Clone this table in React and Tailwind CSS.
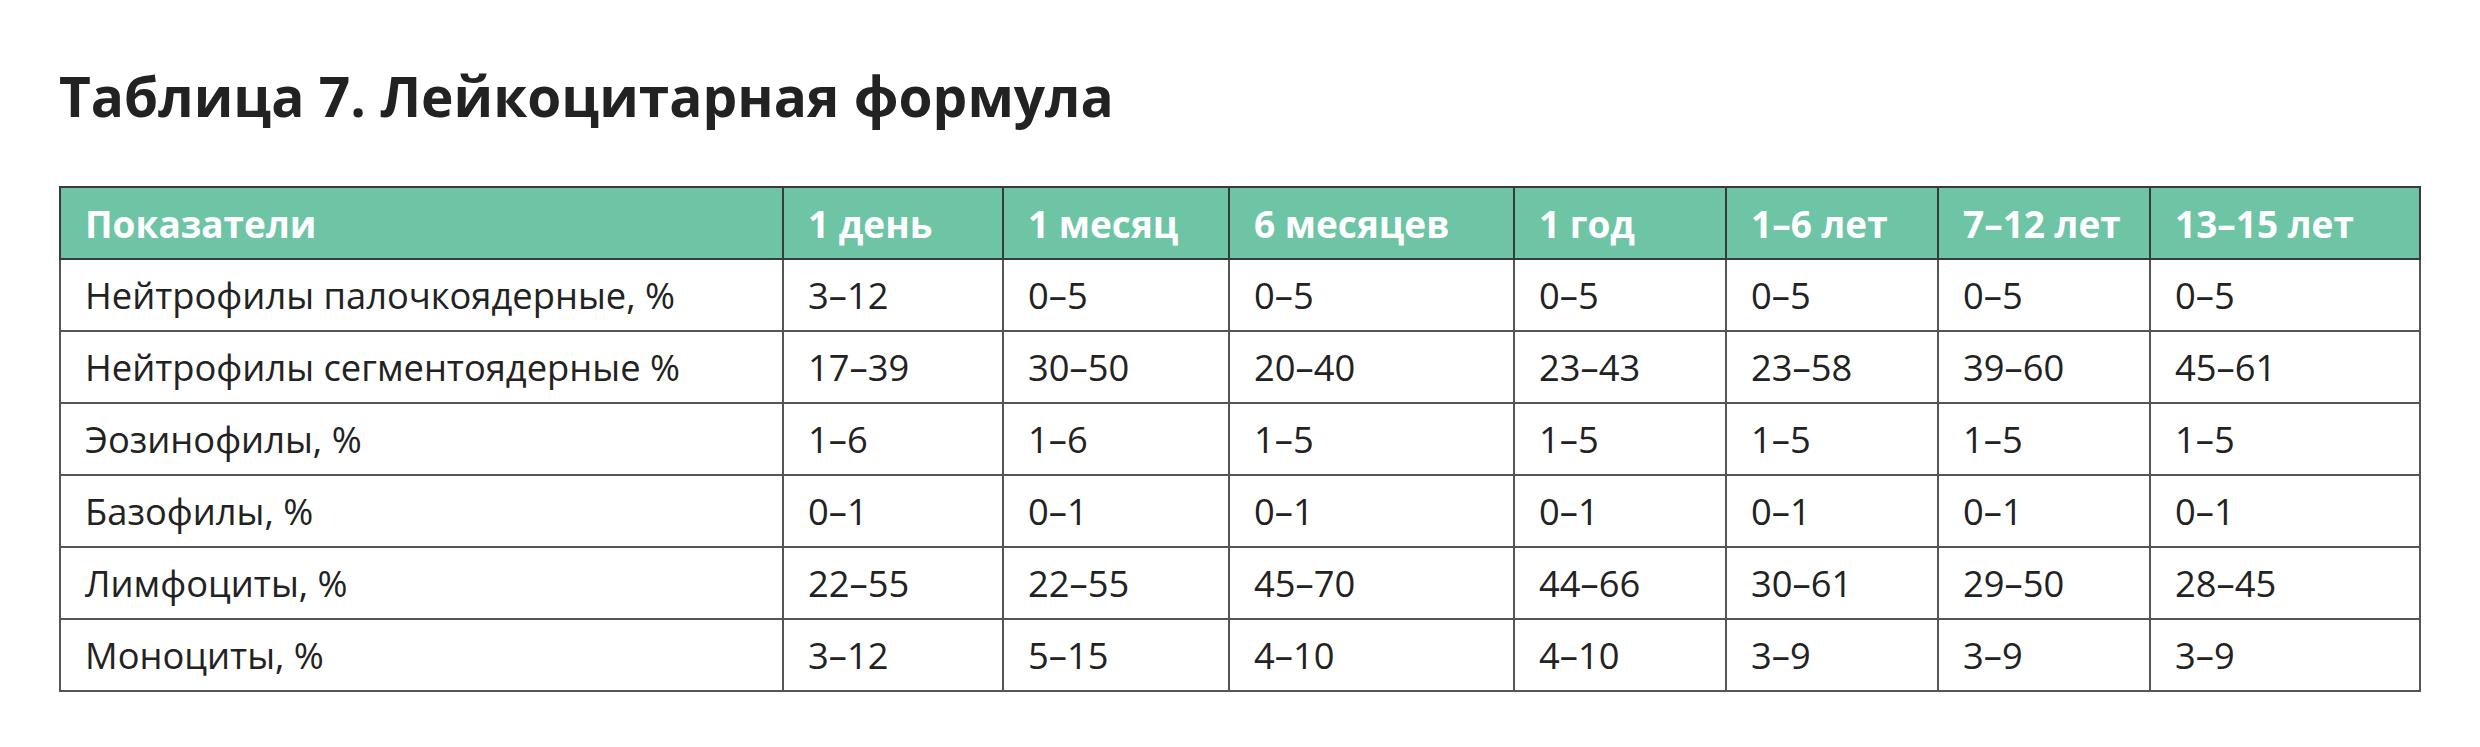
const headers = ["Показатели", "1 день", "1 месяц", "6 месяцев", "1 год", "1–6 лет", "7–12 лет", "13–15 лет"];

const widths = ["w-[723px]", "w-[220px]", "w-[226px]", "w-[285px]", "w-[212px]", "w-[212px]", "w-[212px]", "w-[270px]"];

const rows = [
  ["Нейтрофилы палочкоядерные, %", "3–12", "0–5", "0–5", "0–5", "0–5", "0–5", "0–5"],
  ["Нейтрофилы сегментоядерные %", "17–39", "30–50", "20–40", "23–43", "23–58", "39–60", "45–61"],
  ["Эозинофилы, %", "1–6", "1–6", "1–5", "1–5", "1–5", "1–5", "1–5"],
  ["Базофилы, %", "0–1", "0–1", "0–1", "0–1", "0–1", "0–1", "0–1"],
  ["Лимфоциты, %", "22–55", "22–55", "45–70", "44–66", "30–61", "29–50", "28–45"],
  ["Моноциты, %", "3–12", "5–15", "4–10", "4–10", "3–9", "3–9", "3–9"],
];

export default function App() {
  return (
    <div className="min-h-[747px] bg-white px-[59px] pt-[68px] text-[#222] font-['Open_Sans',sans-serif]">
      <h1 className="text-[55px] leading-none font-bold">
        Таблица 7. Лейкоцитарная формула
      </h1>

      <table className="mt-[63px] w-[2362px] table-fixed border-collapse text-[36.3px]">
        <thead>
          <tr className="h-[72px] bg-[#6dc5a6] text-white">
            {headers.map((h, i) => (
              <th
                key={h}
                className={`${widths[i]} border-2 border-[#3a3a3a] px-[24px] text-left text-[37px] font-bold leading-none`}
              >
                {h}
              </th>
            ))}
          </tr>
        </thead>
        <tbody>
          {rows.map((row) => (
            <tr key={row[0]} className="h-[72px]">
              {row.map((cell, i) => (
                <td key={i} className="border-2 border-[#555] px-[24px] leading-none font-normal">
                  {cell}
                </td>
              ))}
            </tr>
          ))}
        </tbody>
      </table>
    </div>
  );
}
